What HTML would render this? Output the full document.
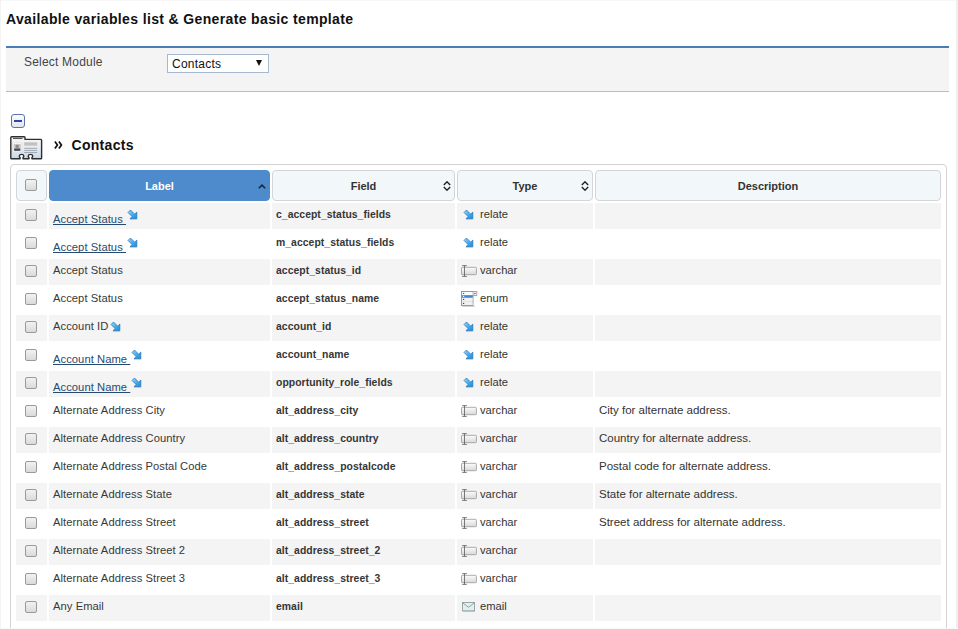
<!DOCTYPE html>
<html><head><meta charset="utf-8">
<style>
*{margin:0;padding:0;box-sizing:border-box}
html,body{width:958px;height:629px;overflow:hidden;background:#f0f0f0;font-family:"Liberation Sans",sans-serif}
#frame{position:absolute;left:0;top:0;width:956px;height:629px;background:#fff;border-left:1px solid #f3f3f3;border-top:1px solid #f8f8f8;border-bottom:1px solid #f6f6f6}
#title{position:absolute;left:6px;top:11px;font-size:14px;font-weight:bold;color:#111;letter-spacing:0.36px;line-height:16px;white-space:nowrap}
#bar{position:absolute;left:6px;top:46px;width:943px;height:46px;background:#f4f4f4;border-top:2px solid #4a7db6;border-bottom:1px solid #a9c0d3}
#selm{position:absolute;left:24px;top:55px;font-size:12px;color:#444;line-height:14px;letter-spacing:0.2px}
#sel{position:absolute;left:167px;top:54px;width:102px;height:19px;background:#fff;border:1px solid #a6b9cf}
#sel span{position:absolute;left:4px;top:2px;font-size:12px;color:#111;line-height:14px;letter-spacing:0.25px}
#sel i{position:absolute;left:88px;top:5px;width:0;height:0;border-left:3.5px solid transparent;border-right:3.5px solid transparent;border-top:6px solid #111}
#minus{position:absolute;left:11px;top:114px;width:14px;height:14px;border:1px solid #5f70b0;border-radius:3px;background:linear-gradient(#fdfdfd,#e3e5ee)}
#minus i{position:absolute;left:2px;top:5px;width:8px;height:2px;background:#2b45b0}
#micon{position:absolute;left:10px;top:136px}
#raquo{position:absolute;left:54px;top:141px}
#mname{position:absolute;left:71.5px;top:137px;font-size:14px;font-weight:bold;color:#111;line-height:16px;letter-spacing:0.3px}
#tbl{position:absolute;left:10px;top:164px;width:937px;height:480px;border:1px solid #d2d2d2;border-radius:4px;background:#fff}
.h{position:absolute;top:170px;height:31px;border:1px solid #d3d6d9;border-radius:4px;background:#f2f7fa;font-size:11px;font-weight:bold;color:#333;text-align:center;line-height:31px}
.h.blue{background:#4d8bcc;border-color:#4d8bcc;color:#fff}
.c{position:absolute;height:26px}
.odd{background:#f4f4f4}
.even{background:#fff}
.cb{position:absolute;left:25px;width:12px;height:12px;border:1px solid #9a9a9a;border-radius:2px;background:linear-gradient(#f2f2f2,#dadada)}
.hcb{top:179px}
.ic{position:absolute}
.lab{position:absolute;left:53px;height:26px;font-size:11.2px;color:#383838;line-height:22px;white-space:nowrap;letter-spacing:0.06px}
.lab.lnk{line-height:32px;color:#274a70}
.lab .u{text-decoration:underline;text-decoration-skip-ink:none}
.fld{position:absolute;left:276px;height:26px;font-size:10.4px;font-weight:bold;color:#363636;line-height:24px;white-space:nowrap;letter-spacing:0.05px}
.typ{position:absolute;left:480px;height:26px;font-size:11.2px;color:#333;line-height:22px;white-space:nowrap}
.dsc{position:absolute;left:599px;height:26px;font-size:11.5px;color:#333;line-height:22px;white-space:nowrap}
.sort{position:absolute}
</style></head><body>
<svg width="0" height="0" style="position:absolute">
<defs>
<linearGradient id="ag" x1="0" y1="0" x2="1" y2="1"><stop offset="0" stop-color="#9fd6f6"/><stop offset="0.6" stop-color="#3aa6ea"/><stop offset="1" stop-color="#1f8fd8"/></linearGradient>

<linearGradient id="vg" x1="0" y1="0" x2="0" y2="1"><stop offset="0" stop-color="#fbfbfb"/><stop offset="1" stop-color="#d8d8d8"/></linearGradient>



</defs></svg>
<div id="frame"></div>
<div id="title">Available variables list &amp; Generate basic template</div>
<div id="bar"></div>
<div id="selm">Select Module</div>
<div id="sel"><span>Contacts</span><i></i></div>
<div id="minus"><i></i></div>
<svg id="micon" width="33" height="24" viewBox="0 0 33 24">
<defs><linearGradient id="mg" x1="0" y1="0" x2="0" y2="1"><stop offset="0" stop-color="#f6f6f6"/><stop offset="0.5" stop-color="#e8ecf0"/><stop offset="1" stop-color="#c6d8ea"/></linearGradient></defs>
<path d="M0.8,1.6 Q0.8,0.7 1.7,0.7 H14.2 Q15,0.7 15,1.5 V3.4 H30.8 Q31.6,3.4 31.6,4.2 V21.9 Q31.6,22.7 30.8,22.7 H21.9 V21.6 Q22.8,21 22.7,20 Q22.5,18.4 20.5,18.4 Q18.4,18.4 18.2,20 Q18.1,21 19,21.6 V22.7 H13 V21.6 Q13.9,21 13.8,20 Q13.6,18.4 11.6,18.4 Q9.5,18.4 9.3,20 Q9.2,21 10.1,21.6 V22.7 H1.6 Q0.8,22.7 0.8,21.9 Z" fill="url(#mg)" stroke="#2e2e2e" stroke-width="1.4" stroke-linejoin="round"/>
<path d="M3,2.5 H12.5" stroke="#444" stroke-width="0.9"/>
<rect x="2.6" y="7" width="9.2" height="8.8" fill="#fdfdfd" stroke="#d8d8d8" stroke-width="0.5"/>
<rect x="3.6" y="8" width="7.2" height="6.8" fill="#c8c8c8"/>
<circle cx="7.2" cy="10.4" r="1.7" fill="#8a8a8a"/>
<rect x="4.2" y="12.5" width="6" height="2.3" fill="#4a4a4a"/>
<rect x="14.2" y="6.3" width="13" height="3.4" fill="#c2c2c2"/>
<path d="M14.2,12.3 H27.2 M14.2,14.4 H27.2 M14.2,16.5 H27.2" stroke="#9aa2aa" stroke-width="0.9"/>
</svg>
<svg id="raquo" width="9" height="9" viewBox="0 0 9 9"><path d="M0.9,0.6 L3.4,4 L0.9,7.4 M4.9,0.6 L7.4,4 L4.9,7.4" stroke="#111" stroke-width="1.7" fill="none"/></svg>
<div id="mname">Contacts</div>
<div id="tbl"></div>
<div class="h" style="left:16px;width:31px"></div>
<div class="cb hcb"></div>
<div class="h blue" style="left:49px;width:221px">Label<svg class="sort" style="left:208px;top:13px" width="8" height="5" viewBox="0 0 8 5"><path d="M0.8,4.2 L4,1.1 L7.2,4.2" stroke="#1a2233" stroke-width="1.5" fill="none"/></svg></div>
<div class="h" style="left:272px;width:183px">Field<svg class="sort" style="left:170px;top:10px" width="8" height="10" viewBox="0 0 8 10"><path d="M0.8,4 L4,0.8 L7.2,4 M0.8,6 L4,9.2 L7.2,6" stroke="#222" stroke-width="1.4" fill="none"/></svg></div>
<div class="h" style="left:457px;width:136px">Type<svg class="sort" style="left:123px;top:10px" width="8" height="10" viewBox="0 0 8 10"><path d="M0.8,4 L4,0.8 L7.2,4 M0.8,6 L4,9.2 L7.2,6" stroke="#222" stroke-width="1.4" fill="none"/></svg></div>
<div class="h" style="left:595px;width:346px">Description</div>
<div class="c odd" style="left:16px;top:203px;width:31px"></div>
<div class="c odd" style="left:49px;top:203px;width:221px"></div>
<div class="c odd" style="left:272px;top:203px;width:183px"></div>
<div class="c odd" style="left:457px;top:203px;width:136px"></div>
<div class="c odd" style="left:595px;top:203px;width:346px"></div>
<div class="cb" style="top:209px"></div>
<div class="lab lnk" style="top:203px"><span class="u">Accept Status&nbsp;</span></div>
<svg class="ic" style="left:127px;top:209px" width="11" height="11" viewBox="0 0 11 11"><path d="M1.05,3.5 L3.5,1.0 L7.67,5.17 L9.8,3.1 L9.8,9.7 L3.0,9.7 L5.16,7.61 Z" fill="url(#ag)" stroke="#2a78bd" stroke-width="0.8" stroke-linejoin="round"/><path d="M2.6,10.3 H10.3" stroke="#6a7a88" stroke-opacity="0.35" stroke-width="0.8"/></svg>
<div class="fld" style="top:203px">c_accept_status_fields</div>
<svg class="ic" style="left:463px;top:209px" width="11" height="11" viewBox="0 0 11 11"><path d="M1.05,3.5 L3.5,1.0 L7.67,5.17 L9.8,3.1 L9.8,9.7 L3.0,9.7 L5.16,7.61 Z" fill="url(#ag)" stroke="#2a78bd" stroke-width="0.8" stroke-linejoin="round"/><path d="M2.6,10.3 H10.3" stroke="#6a7a88" stroke-opacity="0.35" stroke-width="0.8"/></svg>
<div class="typ" style="top:203px">relate</div>
<div class="c even" style="left:16px;top:231px;width:31px"></div>
<div class="c even" style="left:49px;top:231px;width:221px"></div>
<div class="c even" style="left:272px;top:231px;width:183px"></div>
<div class="c even" style="left:457px;top:231px;width:136px"></div>
<div class="c even" style="left:595px;top:231px;width:346px"></div>
<div class="cb" style="top:237px"></div>
<div class="lab lnk" style="top:231px"><span class="u">Accept Status&nbsp;</span></div>
<svg class="ic" style="left:127px;top:237px" width="11" height="11" viewBox="0 0 11 11"><path d="M1.05,3.5 L3.5,1.0 L7.67,5.17 L9.8,3.1 L9.8,9.7 L3.0,9.7 L5.16,7.61 Z" fill="url(#ag)" stroke="#2a78bd" stroke-width="0.8" stroke-linejoin="round"/><path d="M2.6,10.3 H10.3" stroke="#6a7a88" stroke-opacity="0.35" stroke-width="0.8"/></svg>
<div class="fld" style="top:231px">m_accept_status_fields</div>
<svg class="ic" style="left:463px;top:237px" width="11" height="11" viewBox="0 0 11 11"><path d="M1.05,3.5 L3.5,1.0 L7.67,5.17 L9.8,3.1 L9.8,9.7 L3.0,9.7 L5.16,7.61 Z" fill="url(#ag)" stroke="#2a78bd" stroke-width="0.8" stroke-linejoin="round"/><path d="M2.6,10.3 H10.3" stroke="#6a7a88" stroke-opacity="0.35" stroke-width="0.8"/></svg>
<div class="typ" style="top:231px">relate</div>
<div class="c odd" style="left:16px;top:259px;width:31px"></div>
<div class="c odd" style="left:49px;top:259px;width:221px"></div>
<div class="c odd" style="left:272px;top:259px;width:183px"></div>
<div class="c odd" style="left:457px;top:259px;width:136px"></div>
<div class="c odd" style="left:595px;top:259px;width:346px"></div>
<div class="cb" style="top:265px"></div>
<div class="lab" style="top:259px">Accept Status</div>
<div class="fld" style="top:259px">accept_status_id</div>
<svg class="ic" style="left:461px;top:265px" width="17" height="13" viewBox="0 0 17 13"><rect x="0.5" y="2.3" width="14.9" height="7.4" rx="0.8" fill="url(#vg)" stroke="#a2a2a2" stroke-width="0.9"/><path d="M3.5,0.6 V11.4 M1.2,0.6 H5.8 M1.2,11.4 H5.8" stroke="#5a5a5a" stroke-width="0.8" fill="none"/></svg>
<div class="typ" style="top:259px">varchar</div>
<div class="c even" style="left:16px;top:287px;width:31px"></div>
<div class="c even" style="left:49px;top:287px;width:221px"></div>
<div class="c even" style="left:272px;top:287px;width:183px"></div>
<div class="c even" style="left:457px;top:287px;width:136px"></div>
<div class="c even" style="left:595px;top:287px;width:346px"></div>
<div class="cb" style="top:293px"></div>
<div class="lab" style="top:287px">Accept Status</div>
<div class="fld" style="top:287px">accept_status_name</div>
<svg class="ic" style="left:461px;top:291px" width="17" height="16" viewBox="0 0 17 16"><rect x="0.5" y="0.5" width="11.5" height="14" fill="#e2e2e2" stroke="#8e8e8e" stroke-width="0.9"/><rect x="12" y="0.5" width="3.8" height="4" fill="#f4f4f4" stroke="#9a9a9a" stroke-width="0.8"/><rect x="1" y="1" width="10.6" height="3" fill="#fbffff"/><rect x="1" y="4.2" width="10.6" height="2.5" fill="#3f86cc"/><rect x="1" y="7" width="10.6" height="3" fill="#f2f2f2"/><rect x="1" y="11" width="10.6" height="3" fill="#f0f0f0"/><circle cx="2.6" cy="2.4" r="0.7" fill="#555"/><circle cx="2.6" cy="5.4" r="0.7" fill="#dff"/><circle cx="2.6" cy="8.4" r="0.7" fill="#444"/><circle cx="2.6" cy="12.4" r="0.7" fill="#444"/><circle cx="13.9" cy="2.5" r="0.7" fill="#555"/><path d="M1.5,15.3 H14" stroke="#bbb" stroke-width="0.8"/></svg>
<div class="typ" style="top:287px">enum</div>
<div class="c odd" style="left:16px;top:315px;width:31px"></div>
<div class="c odd" style="left:49px;top:315px;width:221px"></div>
<div class="c odd" style="left:272px;top:315px;width:183px"></div>
<div class="c odd" style="left:457px;top:315px;width:136px"></div>
<div class="c odd" style="left:595px;top:315px;width:346px"></div>
<div class="cb" style="top:321px"></div>
<div class="lab" style="top:315px">Account ID</div>
<svg class="ic" style="left:110px;top:321px" width="11" height="11" viewBox="0 0 11 11"><path d="M1.05,3.5 L3.5,1.0 L7.67,5.17 L9.8,3.1 L9.8,9.7 L3.0,9.7 L5.16,7.61 Z" fill="url(#ag)" stroke="#2a78bd" stroke-width="0.8" stroke-linejoin="round"/><path d="M2.6,10.3 H10.3" stroke="#6a7a88" stroke-opacity="0.35" stroke-width="0.8"/></svg>
<div class="fld" style="top:315px">account_id</div>
<svg class="ic" style="left:463px;top:321px" width="11" height="11" viewBox="0 0 11 11"><path d="M1.05,3.5 L3.5,1.0 L7.67,5.17 L9.8,3.1 L9.8,9.7 L3.0,9.7 L5.16,7.61 Z" fill="url(#ag)" stroke="#2a78bd" stroke-width="0.8" stroke-linejoin="round"/><path d="M2.6,10.3 H10.3" stroke="#6a7a88" stroke-opacity="0.35" stroke-width="0.8"/></svg>
<div class="typ" style="top:315px">relate</div>
<div class="c even" style="left:16px;top:343px;width:31px"></div>
<div class="c even" style="left:49px;top:343px;width:221px"></div>
<div class="c even" style="left:272px;top:343px;width:183px"></div>
<div class="c even" style="left:457px;top:343px;width:136px"></div>
<div class="c even" style="left:595px;top:343px;width:346px"></div>
<div class="cb" style="top:349px"></div>
<div class="lab lnk" style="top:343px"><span class="u">Account Name&nbsp;</span></div>
<svg class="ic" style="left:131px;top:349px" width="11" height="11" viewBox="0 0 11 11"><path d="M1.05,3.5 L3.5,1.0 L7.67,5.17 L9.8,3.1 L9.8,9.7 L3.0,9.7 L5.16,7.61 Z" fill="url(#ag)" stroke="#2a78bd" stroke-width="0.8" stroke-linejoin="round"/><path d="M2.6,10.3 H10.3" stroke="#6a7a88" stroke-opacity="0.35" stroke-width="0.8"/></svg>
<div class="fld" style="top:343px">account_name</div>
<svg class="ic" style="left:463px;top:349px" width="11" height="11" viewBox="0 0 11 11"><path d="M1.05,3.5 L3.5,1.0 L7.67,5.17 L9.8,3.1 L9.8,9.7 L3.0,9.7 L5.16,7.61 Z" fill="url(#ag)" stroke="#2a78bd" stroke-width="0.8" stroke-linejoin="round"/><path d="M2.6,10.3 H10.3" stroke="#6a7a88" stroke-opacity="0.35" stroke-width="0.8"/></svg>
<div class="typ" style="top:343px">relate</div>
<div class="c odd" style="left:16px;top:371px;width:31px"></div>
<div class="c odd" style="left:49px;top:371px;width:221px"></div>
<div class="c odd" style="left:272px;top:371px;width:183px"></div>
<div class="c odd" style="left:457px;top:371px;width:136px"></div>
<div class="c odd" style="left:595px;top:371px;width:346px"></div>
<div class="cb" style="top:377px"></div>
<div class="lab lnk" style="top:371px"><span class="u">Account Name&nbsp;</span></div>
<svg class="ic" style="left:131px;top:377px" width="11" height="11" viewBox="0 0 11 11"><path d="M1.05,3.5 L3.5,1.0 L7.67,5.17 L9.8,3.1 L9.8,9.7 L3.0,9.7 L5.16,7.61 Z" fill="url(#ag)" stroke="#2a78bd" stroke-width="0.8" stroke-linejoin="round"/><path d="M2.6,10.3 H10.3" stroke="#6a7a88" stroke-opacity="0.35" stroke-width="0.8"/></svg>
<div class="fld" style="top:371px">opportunity_role_fields</div>
<svg class="ic" style="left:463px;top:377px" width="11" height="11" viewBox="0 0 11 11"><path d="M1.05,3.5 L3.5,1.0 L7.67,5.17 L9.8,3.1 L9.8,9.7 L3.0,9.7 L5.16,7.61 Z" fill="url(#ag)" stroke="#2a78bd" stroke-width="0.8" stroke-linejoin="round"/><path d="M2.6,10.3 H10.3" stroke="#6a7a88" stroke-opacity="0.35" stroke-width="0.8"/></svg>
<div class="typ" style="top:371px">relate</div>
<div class="c even" style="left:16px;top:399px;width:31px"></div>
<div class="c even" style="left:49px;top:399px;width:221px"></div>
<div class="c even" style="left:272px;top:399px;width:183px"></div>
<div class="c even" style="left:457px;top:399px;width:136px"></div>
<div class="c even" style="left:595px;top:399px;width:346px"></div>
<div class="cb" style="top:405px"></div>
<div class="lab" style="top:399px">Alternate Address City</div>
<div class="fld" style="top:399px">alt_address_city</div>
<svg class="ic" style="left:461px;top:405px" width="17" height="13" viewBox="0 0 17 13"><rect x="0.5" y="2.3" width="14.9" height="7.4" rx="0.8" fill="url(#vg)" stroke="#a2a2a2" stroke-width="0.9"/><path d="M3.5,0.6 V11.4 M1.2,0.6 H5.8 M1.2,11.4 H5.8" stroke="#5a5a5a" stroke-width="0.8" fill="none"/></svg>
<div class="typ" style="top:399px">varchar</div>
<div class="dsc" style="top:399px">City for alternate address.</div>
<div class="c odd" style="left:16px;top:427px;width:31px"></div>
<div class="c odd" style="left:49px;top:427px;width:221px"></div>
<div class="c odd" style="left:272px;top:427px;width:183px"></div>
<div class="c odd" style="left:457px;top:427px;width:136px"></div>
<div class="c odd" style="left:595px;top:427px;width:346px"></div>
<div class="cb" style="top:433px"></div>
<div class="lab" style="top:427px">Alternate Address Country</div>
<div class="fld" style="top:427px">alt_address_country</div>
<svg class="ic" style="left:461px;top:433px" width="17" height="13" viewBox="0 0 17 13"><rect x="0.5" y="2.3" width="14.9" height="7.4" rx="0.8" fill="url(#vg)" stroke="#a2a2a2" stroke-width="0.9"/><path d="M3.5,0.6 V11.4 M1.2,0.6 H5.8 M1.2,11.4 H5.8" stroke="#5a5a5a" stroke-width="0.8" fill="none"/></svg>
<div class="typ" style="top:427px">varchar</div>
<div class="dsc" style="top:427px">Country for alternate address.</div>
<div class="c even" style="left:16px;top:455px;width:31px"></div>
<div class="c even" style="left:49px;top:455px;width:221px"></div>
<div class="c even" style="left:272px;top:455px;width:183px"></div>
<div class="c even" style="left:457px;top:455px;width:136px"></div>
<div class="c even" style="left:595px;top:455px;width:346px"></div>
<div class="cb" style="top:461px"></div>
<div class="lab" style="top:455px">Alternate Address Postal Code</div>
<div class="fld" style="top:455px">alt_address_postalcode</div>
<svg class="ic" style="left:461px;top:461px" width="17" height="13" viewBox="0 0 17 13"><rect x="0.5" y="2.3" width="14.9" height="7.4" rx="0.8" fill="url(#vg)" stroke="#a2a2a2" stroke-width="0.9"/><path d="M3.5,0.6 V11.4 M1.2,0.6 H5.8 M1.2,11.4 H5.8" stroke="#5a5a5a" stroke-width="0.8" fill="none"/></svg>
<div class="typ" style="top:455px">varchar</div>
<div class="dsc" style="top:455px">Postal code for alternate address.</div>
<div class="c odd" style="left:16px;top:483px;width:31px"></div>
<div class="c odd" style="left:49px;top:483px;width:221px"></div>
<div class="c odd" style="left:272px;top:483px;width:183px"></div>
<div class="c odd" style="left:457px;top:483px;width:136px"></div>
<div class="c odd" style="left:595px;top:483px;width:346px"></div>
<div class="cb" style="top:489px"></div>
<div class="lab" style="top:483px">Alternate Address State</div>
<div class="fld" style="top:483px">alt_address_state</div>
<svg class="ic" style="left:461px;top:489px" width="17" height="13" viewBox="0 0 17 13"><rect x="0.5" y="2.3" width="14.9" height="7.4" rx="0.8" fill="url(#vg)" stroke="#a2a2a2" stroke-width="0.9"/><path d="M3.5,0.6 V11.4 M1.2,0.6 H5.8 M1.2,11.4 H5.8" stroke="#5a5a5a" stroke-width="0.8" fill="none"/></svg>
<div class="typ" style="top:483px">varchar</div>
<div class="dsc" style="top:483px">State for alternate address.</div>
<div class="c even" style="left:16px;top:511px;width:31px"></div>
<div class="c even" style="left:49px;top:511px;width:221px"></div>
<div class="c even" style="left:272px;top:511px;width:183px"></div>
<div class="c even" style="left:457px;top:511px;width:136px"></div>
<div class="c even" style="left:595px;top:511px;width:346px"></div>
<div class="cb" style="top:517px"></div>
<div class="lab" style="top:511px">Alternate Address Street</div>
<div class="fld" style="top:511px">alt_address_street</div>
<svg class="ic" style="left:461px;top:517px" width="17" height="13" viewBox="0 0 17 13"><rect x="0.5" y="2.3" width="14.9" height="7.4" rx="0.8" fill="url(#vg)" stroke="#a2a2a2" stroke-width="0.9"/><path d="M3.5,0.6 V11.4 M1.2,0.6 H5.8 M1.2,11.4 H5.8" stroke="#5a5a5a" stroke-width="0.8" fill="none"/></svg>
<div class="typ" style="top:511px">varchar</div>
<div class="dsc" style="top:511px">Street address for alternate address.</div>
<div class="c odd" style="left:16px;top:539px;width:31px"></div>
<div class="c odd" style="left:49px;top:539px;width:221px"></div>
<div class="c odd" style="left:272px;top:539px;width:183px"></div>
<div class="c odd" style="left:457px;top:539px;width:136px"></div>
<div class="c odd" style="left:595px;top:539px;width:346px"></div>
<div class="cb" style="top:545px"></div>
<div class="lab" style="top:539px">Alternate Address Street 2</div>
<div class="fld" style="top:539px">alt_address_street_2</div>
<svg class="ic" style="left:461px;top:545px" width="17" height="13" viewBox="0 0 17 13"><rect x="0.5" y="2.3" width="14.9" height="7.4" rx="0.8" fill="url(#vg)" stroke="#a2a2a2" stroke-width="0.9"/><path d="M3.5,0.6 V11.4 M1.2,0.6 H5.8 M1.2,11.4 H5.8" stroke="#5a5a5a" stroke-width="0.8" fill="none"/></svg>
<div class="typ" style="top:539px">varchar</div>
<div class="c even" style="left:16px;top:567px;width:31px"></div>
<div class="c even" style="left:49px;top:567px;width:221px"></div>
<div class="c even" style="left:272px;top:567px;width:183px"></div>
<div class="c even" style="left:457px;top:567px;width:136px"></div>
<div class="c even" style="left:595px;top:567px;width:346px"></div>
<div class="cb" style="top:573px"></div>
<div class="lab" style="top:567px">Alternate Address Street 3</div>
<div class="fld" style="top:567px">alt_address_street_3</div>
<svg class="ic" style="left:461px;top:573px" width="17" height="13" viewBox="0 0 17 13"><rect x="0.5" y="2.3" width="14.9" height="7.4" rx="0.8" fill="url(#vg)" stroke="#a2a2a2" stroke-width="0.9"/><path d="M3.5,0.6 V11.4 M1.2,0.6 H5.8 M1.2,11.4 H5.8" stroke="#5a5a5a" stroke-width="0.8" fill="none"/></svg>
<div class="typ" style="top:567px">varchar</div>
<div class="c odd" style="left:16px;top:595px;width:31px"></div>
<div class="c odd" style="left:49px;top:595px;width:221px"></div>
<div class="c odd" style="left:272px;top:595px;width:183px"></div>
<div class="c odd" style="left:457px;top:595px;width:136px"></div>
<div class="c odd" style="left:595px;top:595px;width:346px"></div>
<div class="cb" style="top:601px"></div>
<div class="lab" style="top:595px">Any Email</div>
<div class="fld" style="top:595px">email</div>
<svg class="ic" style="left:462px;top:602px" width="14" height="10" viewBox="0 0 14 10"><rect x="0.5" y="0.5" width="12" height="8.3" fill="#e4eeee" stroke="#8fa0a0" stroke-width="0.9"/><path d="M0.8,0.9 L6.5,5.3 L12.2,0.9" stroke="#8a9b9b" stroke-width="0.9" fill="none"/><path d="M1,9.5 H13" stroke="#aaa" stroke-opacity="0.6"/></svg>
<div class="typ" style="top:595px">email</div>
<div style="position:absolute;left:0;top:628px;width:958px;height:1px;background:#f7f7f7"></div>
</body></html>
